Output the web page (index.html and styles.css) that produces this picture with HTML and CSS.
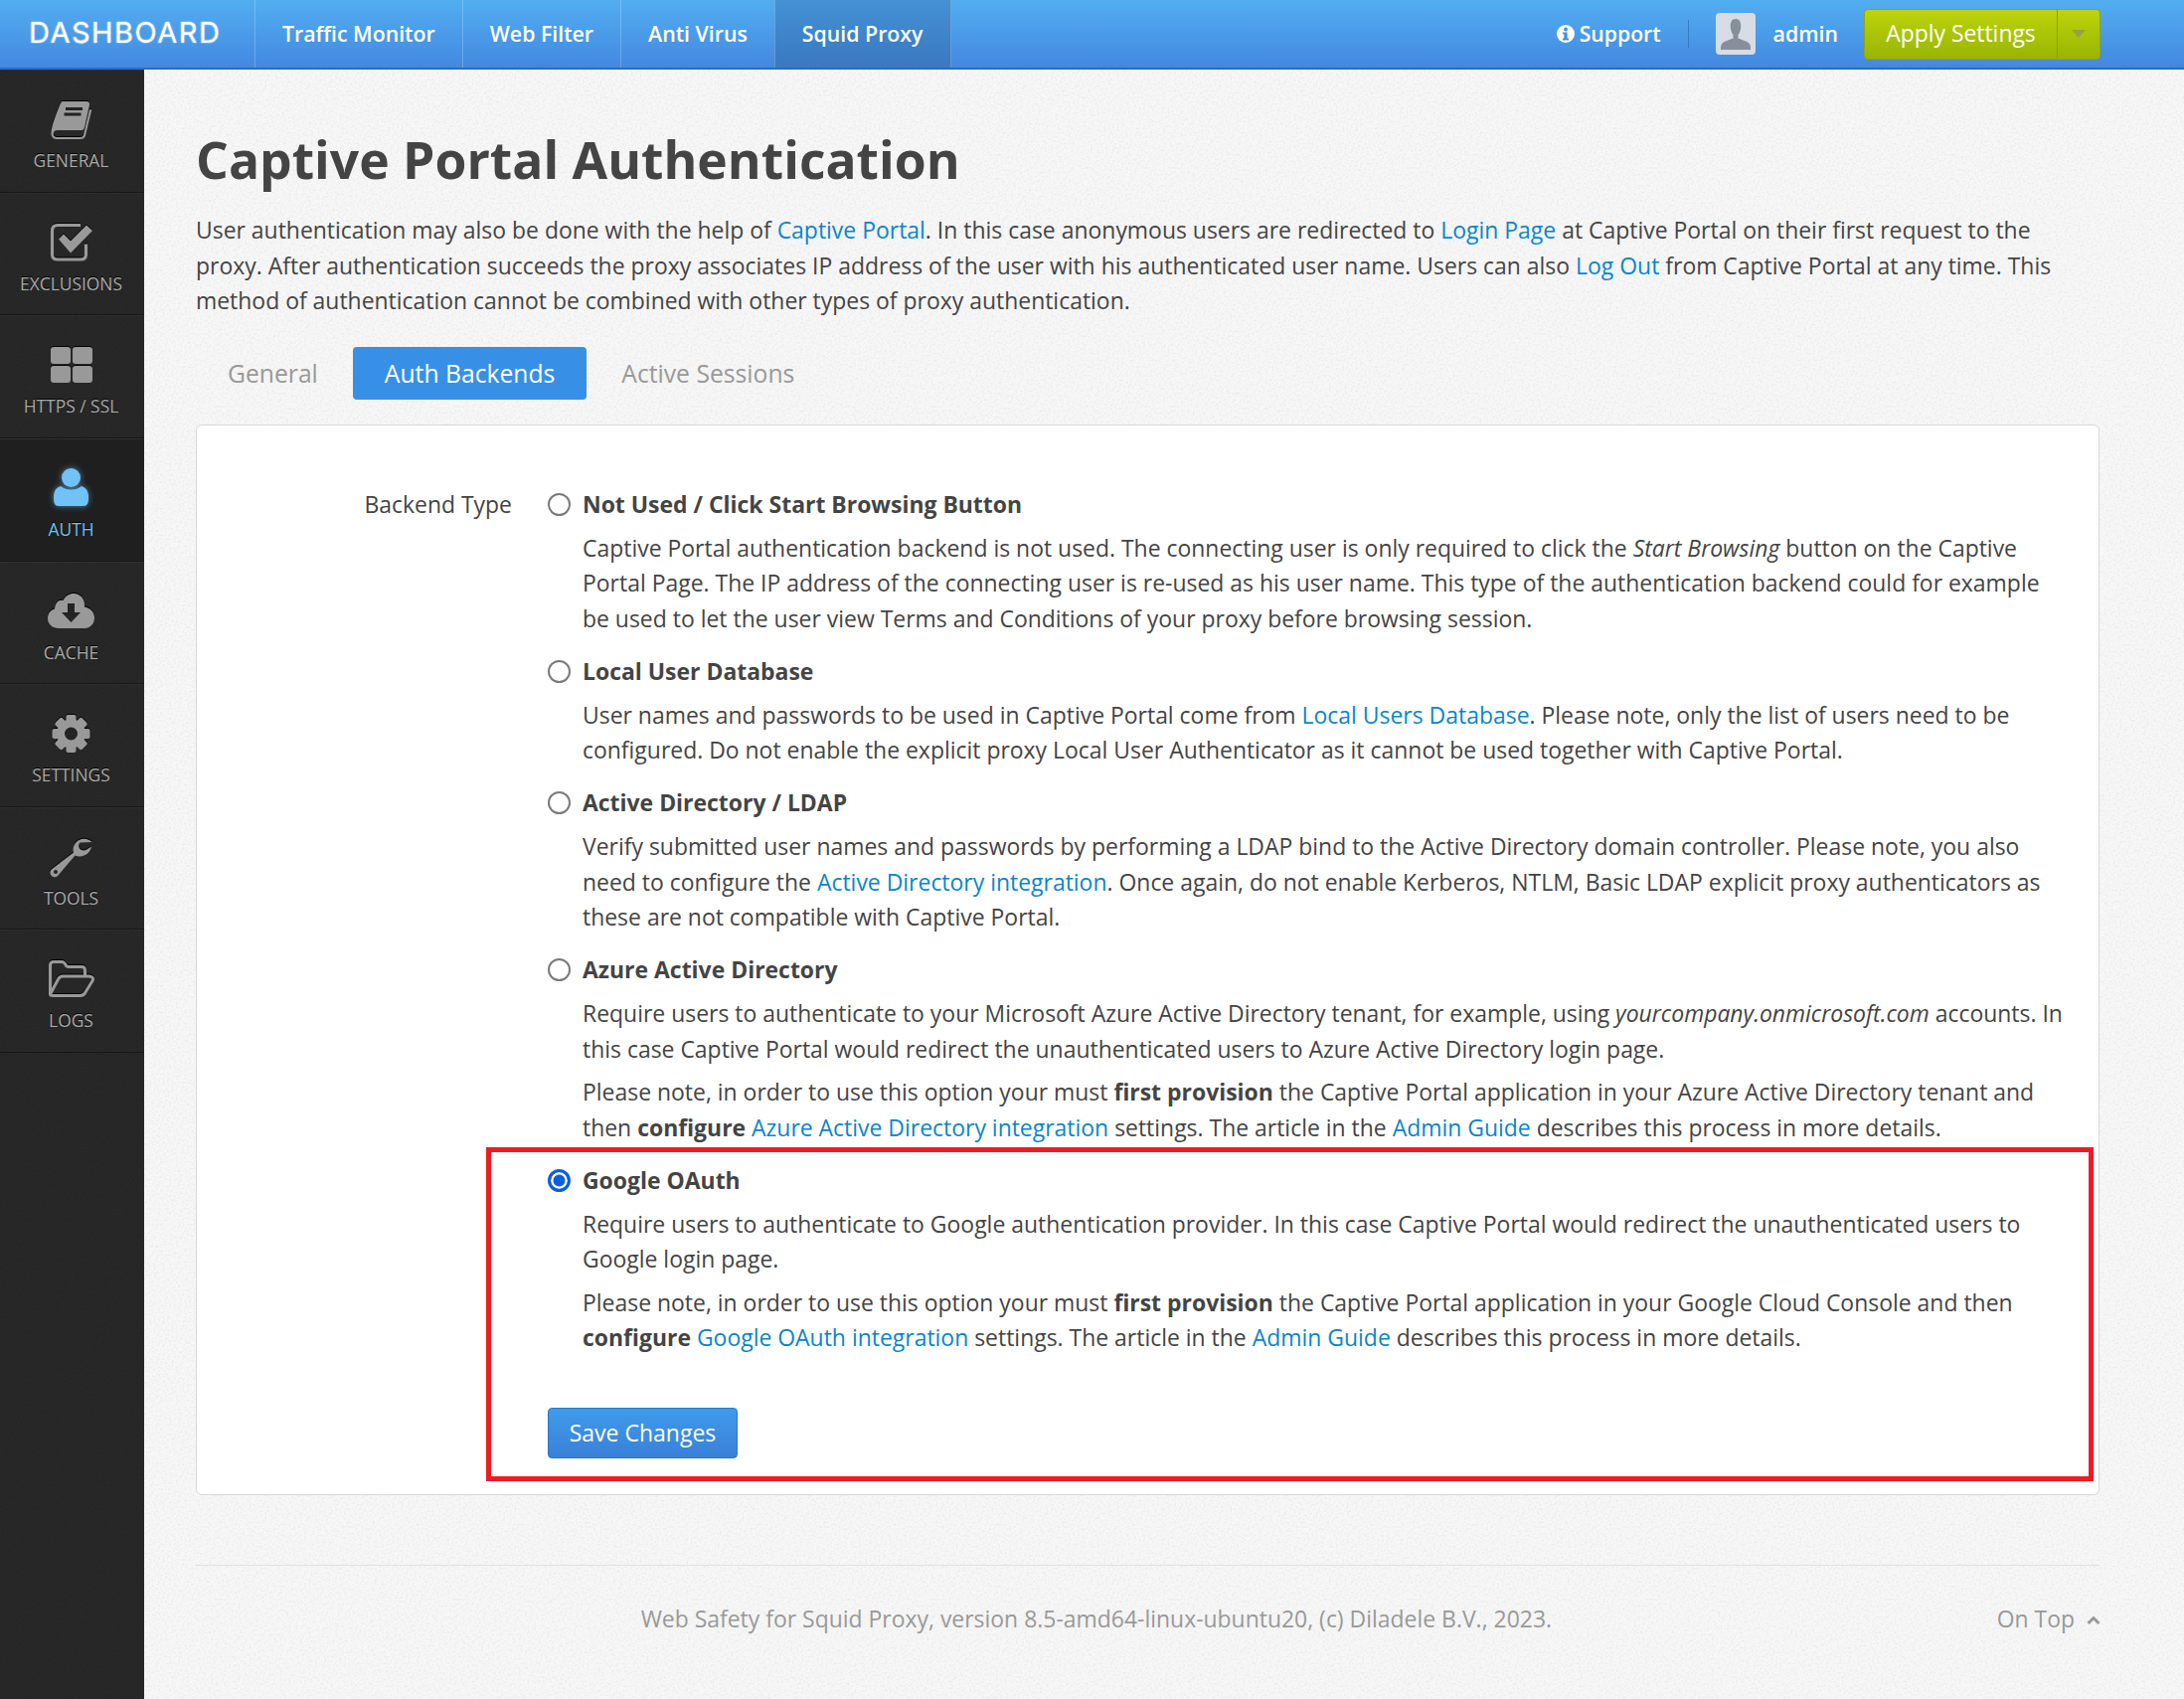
FILE: index.html
```html
<!DOCTYPE html>
<html lang="en">
<head>
<meta charset="utf-8">
<title>Captive Portal Authentication</title>
<link rel="stylesheet" href="styles.css">
</head>
<body>
<header class="topbar">
  <a class="brand">DASHBOARD</a>
  <nav class="topnav">
    <a class="topnav-item">Traffic Monitor</a>
    <a class="topnav-item">Web Filter</a>
    <a class="topnav-item">Anti Virus</a>
    <a class="topnav-item is-active">Squid Proxy</a>
  </nav>
  <div class="topright">
    <a class="support">
      <svg class="support-icon" viewBox="0 0 18 18"><circle cx="9" cy="9" r="9" fill="#fff"/><circle cx="9" cy="4.400" r="2" fill="#3f8ee0"/><path d="M6 7.400h4.600v6.200H12v1.900H6v-1.900h1.400V9.300H6z" fill="#3f8ee0"/></svg>
      <span>Support</span>
    </a>
    <span class="vsep"></span>
    <svg class="avatar" viewBox="0 0 40 42"><rect width="40" height="42" rx="4" fill="#d7dce5"/><path d="M20 6c4 0 5.500 3.500 5.200 8-.2 3.500-1.200 6-2.700 8v3.500l9 3.500c2 1 3.500 3 3.500 6v2H5v-2c0-3 1.500-5 3.500-6l9-3.500V22c-1.500-2-2.500-4.500-2.700-8-.3-4.500 1.200-8 5.200-8z" fill="#888e9a"/></svg>
    <span class="username">admin</span>
    <div class="apply">
      <a class="apply-main">Apply Settings</a>
      <a class="apply-caret"><i></i></a>
    </div>
  </div>
</header>

<div class="shell">
  <aside class="sidebar">
    <a class="side-item">
      <svg class="side-icon" viewBox="0 0 47 42"><path d="M14 2h25c2 0 3.500 1 3 3.500L37 28c-.6 2.500-2 3-4 3H10c-3 0-4.500 1.500-4.500 3 0 .5 0 1 .3 1.500L3.500 33C4 26 10 10 14 2z" fill="#999"/><path d="M5 32c-1.500 4 .5 7 4 7h24c2 0 3.400-1 4-3l6-25" fill="none" stroke="#999" stroke-width="2.200" stroke-linecap="round"/><path d="M18 9.500h17M16.500 15h17" stroke="#222" stroke-width="3"/></svg>
      <span>General</span>
    </a>
    <a class="side-item">
      <svg class="side-icon" viewBox="0 0 47 42"><g transform="translate(-1 -2.500)"><path d="M34 5H11c-3.500 0-5.500 2-5.500 5.500v24c0 3 2 5 5.500 5h23c3.500 0 5.500-2 5.500-5V24" fill="none" stroke="#999" stroke-width="3.200"/><path d="M12 19l5-5 7 7L40 5l6 5.500L24 33z" fill="#999"/></g></svg>
      <span>Exclusions</span>
    </a>
    <a class="side-item">
      <svg class="side-icon" viewBox="0 0 47 42"><rect x="3" y="2" width="20" height="17" rx="3" fill="#999"/><rect x="25" y="2" width="20" height="17" rx="3" fill="#999"/><rect x="3" y="21" width="20" height="17" rx="3" fill="#999"/><rect x="25" y="21" width="20" height="17" rx="3" fill="#999"/></svg>
      <span>HTTPS / SSL</span>
    </a>
    <a class="side-item is-active">
      <svg class="side-icon" viewBox="0 0 47 42"><circle cx="23.500" cy="9.500" r="9.500" fill="#71c2f6"/><path d="M13 18c3 2.500 6.500 3.500 10.500 3.500S31 20.500 34 18c4.500 1.500 7 5 7 11 0 6-1 9-5 9H11c-4 0-5-3-5-9 0-6 2.500-9.500 7-11z" fill="#71c2f6"/></svg>
      <span>Auth</span>
    </a>
    <a class="side-item">
      <svg class="side-icon" viewBox="0 0 47 42"><path d="M11 37C5 37 0 33 0 27c0-5 3-8.500 7-9.500C7.500 11 11 8 15.500 9 18 4 22 2 26 2c6.500 0 11 5 11 11 .1 1 0 2 0 2.500 5.500.8 10 5 10 11 0 6-4.500 10.500-10 10.500z" fill="#999"/><path d="M20 12h7v9h6L23.500 31 14 21h6z" fill="#232323"/></svg>
      <span>Cache</span>
    </a>
    <a class="side-item">
      <svg class="side-icon" viewBox="0 0 47 42"><g fill="#999"><circle cx="23.500" cy="20" r="14.500"/><rect x="18.500" y="1" width="10" height="38" rx="2"/><rect x="18.500" y="1" width="10" height="38" rx="2" transform="rotate(45 23.500 20)"/><rect x="18.500" y="1" width="10" height="38" rx="2" transform="rotate(90 23.500 20)"/><rect x="18.500" y="1" width="10" height="38" rx="2" transform="rotate(135 23.500 20)"/></g><circle cx="23.500" cy="20" r="6.500" fill="#232323"/></svg>
      <span>Settings</span>
    </a>
    <a class="side-item">
      <svg class="side-icon" viewBox="0 0 47 42"><path d="M44.500 5c-4-3.500-9-4-12.800-2-5 2.500-7.200 8-5.700 12.500L4.500 32c-2.500 2-2.500 4.500-1 6.500s4.500 2.700 6.500.5l17.500-20.500c4.500 2 10.500.5 13.500-3 1.500-1.700 2.500-3.500 3-6l-5.500 3.500c-2.500 1-5 .5-6.500-1.500-1.500-2-1-4.500.5-6z" fill="#999"/><circle cx="8" cy="35" r="2" fill="#232323"/></svg>
      <span>Tools</span>
    </a>
    <a class="side-item">
      <svg class="side-icon" viewBox="0 0 47 42"><path d="M2.500 36V6c0-2 1-3.500 3.500-3.500h8c2 0 3 1 4 3 .6 1.500 1.500 2 3 2h13c2.500 0 3.500 1.500 3.500 3.500v5M2.500 35l8-15c1-2 2.500-3 4.500-3h26.500c3 0 5 2 3.500 4.500L38 33c-1 2-2.500 3.500-5 3.500H5c-2 0-2.500-.5-2.500-1.500z" fill="none" stroke="#999" stroke-width="3" stroke-linejoin="round"/></svg>
      <span>Logs</span>
    </a>
  </aside>

  <main class="content">
    <h1 class="title">Captive Portal Authentication</h1>
    <p class="intro">User authentication may also be done with the help of <a>Captive Portal</a>. In this case anonymous users are redirected to <a>Login Page</a> at Captive Portal on their first request to the proxy. After authentication succeeds the proxy associates IP address of the user with his authenticated user name. Users can also <a>Log Out</a> from Captive Portal at any time. This method of authentication cannot be combined with other types of proxy authentication.</p>

    <div class="tabs">
      <a class="tab">General</a>
      <a class="tab is-active">Auth Backends</a>
      <a class="tab">Active Sessions</a>
    </div>

    <section class="panel">
      <div class="field-label">Backend Type</div>
      <form class="options">
        <div class="option">
          <label class="option-title"><input type="radio" name="backend"><span>Not Used / Click Start Browsing Button</span></label>
          <p>Captive Portal authentication backend is not used. The connecting user is only required to click the <em>Start Browsing</em> button on the Captive Portal Page. The IP address of the connecting user is re-used as his user name. This type of the authentication backend could for example be used to let the user view Terms and Conditions of your proxy before browsing session.</p>
        </div>
        <div class="option">
          <label class="option-title"><input type="radio" name="backend"><span>Local User Database</span></label>
          <p>User names and passwords to be used in Captive Portal come from <a>Local Users Database</a>. Please note, only the list of users need to be configured. Do not enable the explicit proxy Local User Authenticator as it cannot be used together with Captive Portal.</p>
        </div>
        <div class="option">
          <label class="option-title"><input type="radio" name="backend"><span>Active Directory / LDAP</span></label>
          <p>Verify submitted user names and passwords by performing a LDAP bind to the Active Directory domain controller. Please note, you also need to configure the <a>Active Directory integration</a>. Once again, do not enable Kerberos, NTLM, Basic LDAP explicit proxy authenticators as these are not compatible with Captive Portal.</p>
        </div>
        <div class="option">
          <label class="option-title"><input type="radio" name="backend"><span>Azure Active Directory</span></label>
          <p>Require users to authenticate to your Microsoft Azure Active Directory tenant, for example, using <em>yourcompany.onmicrosoft.com</em> accounts. In this case Captive Portal would redirect the unauthenticated users to Azure Active Directory login page.</p>
          <p>Please note, in order to use this option your must <strong>first provision</strong> the Captive Portal application in your Azure Active Directory tenant and then <strong>configure</strong> <a>Azure Active Directory integration</a> settings. The article in the <a>Admin Guide</a> describes this process in more details.</p>
        </div>
        <div class="option">
          <label class="option-title"><input type="radio" name="backend" checked><span>Google OAuth</span></label>
          <p>Require users to authenticate to Google authentication provider. In this case Captive Portal would redirect the unauthenticated users to Google login page.</p>
          <p>Please note, in order to use this option your must <strong>first provision</strong> the Captive Portal application in your Google Cloud Console and then <strong>configure</strong> <a>Google OAuth integration</a> settings. The article in the <a>Admin Guide</a> describes this process in more details.</p>
        </div>
        <a class="save-btn">Save Changes</a>
      </form>
      <div class="highlight"></div>
    </section>

    <footer class="footer">
      <div class="footer-text">Web Safety for Squid Proxy, version 8.5-amd64-linux-ubuntu20, (c) Diladele B.V., 2023.</div>
      <a class="ontop">On Top <svg class="ontop-icon" viewBox="0 0 14 10"><path d="M1.500 8L7 2.500 12.500 8" fill="none" stroke="#999" stroke-width="3"/></svg></a>
    </footer>
  </main>
</div>
</body>
</html>
```

FILE: styles.css
```css
* { box-sizing: border-box; }
html, body { margin: 0; padding: 0; }
body {
  font-family: "Open Sans", "Noto Sans", sans-serif;
  font-size: 22.950px;
  line-height: 35.5px;
  color: #444;
  background-color: #f7f7f7;
  background-image: url("data:image/svg+xml,%3Csvg xmlns='http://www.w3.org/2000/svg' width='240' height='240'%3E%3Cfilter id='n'%3E%3CfeTurbulence type='fractalNoise' baseFrequency='.45' numOctaves='3' stitchTiles='stitch'/%3E%3CfeColorMatrix values='0 0 0 0 0 0 0 0 0 0 0 0 0 0 0 .5 0 0 0 -.22'/%3E%3C/filter%3E%3Crect width='240' height='240' filter='url(%23n)' opacity='.22'/%3E%3C/svg%3E");
  min-height: 1709px;
  display: flex;
  flex-direction: column;
}
a { color: #0a86c9; text-decoration: none; }

/* Top bar */
.topbar {
  height: 70px;
  flex: none;
  display: flex;
  align-items: stretch;
  background: linear-gradient(#52aef0, #4388e0);
  border-bottom: 2px solid #2a6cc4;
}
.brand {
  width: 256px;
  padding-left: 29px;
  font-family: Inter, "Liberation Sans", sans-serif;
  font-size: 29px;
  font-weight: 400;
  letter-spacing: 1.500px;
  line-height: 66px;
  color: #fff;
  text-shadow: 0 0 2px rgba(255,255,255,.7);
}
.topnav { display: flex; }
.topnav-item {
  padding: 0 27px;
  border-left: 1px solid rgba(255,255,255,.22);
  font-size: 21.300px;
  font-weight: 600;
  line-height: 68px;
  color: #fff;
}
.topnav-item.is-active {
  background: linear-gradient(#4491d4, #3a78c0);
  border-right: 1px solid rgba(255,255,255,.22);
}
.topright { margin-left: auto; display: flex; align-items: center; padding-right: 84px; }
.support { display: flex; align-items: center; gap: 5px; color: #fff; font-size: 21.200px; font-weight: 600; }
.support-icon { width: 18px; height: 18px; }
.vsep { width: 1px; height: 28px; background: rgba(30,90,160,.5); margin: 0 27px; }
.avatar { width: 40px; height: 42px; }
.username { color: #fff; font-size: 21.300px; font-weight: 600; margin: 0 26px 0 18px; }
.apply {
  display: flex;
  height: 51px;
  width: 238px;
  border: 1px solid #8fa806;
  border-radius: 4px;
  background: linear-gradient(#bcd40a, #99b503);
}
.apply-main {
  width: 194px;
  border-right: 1px solid #88a106;
  text-align: center;
  font-size: 22.900px;
  line-height: 47px;
  color: #fff;
}
.apply-caret { flex: 1; display: flex; align-items: center; justify-content: center; }
.apply-caret i { border: 7px solid transparent; border-top: 8px solid #94a04a; border-bottom: 0; }

/* Layout */
.shell { flex: 1; display: flex; }

/* Sidebar */
.sidebar {
  width: 145px;
  flex: none;
  background-color: #252525;
  background-image: url("data:image/svg+xml,%3Csvg xmlns='http://www.w3.org/2000/svg' width='145' height='240'%3E%3Cfilter id='n'%3E%3CfeTurbulence type='fractalNoise' baseFrequency='.9' numOctaves='2'/%3E%3CfeColorMatrix values='0 0 0 0 1 0 0 0 0 1 0 0 0 0 1 .5 0 0 0 -.2'/%3E%3C/filter%3E%3Crect width='145' height='240' filter='url(%23n)' opacity='.1'/%3E%3C/svg%3E");
}
.side-item {
  display: flex;
  flex-direction: column;
  align-items: center;
  height: 123.650px;
  padding: 30px 2px 0 0;
  border-bottom: 1px solid #171717;
  box-shadow: inset 0 1px 0 #2f2f2f;
  color: #aaa;
  font-size: 17.400px;
  line-height: 24px;
  text-transform: uppercase;
  text-shadow: 0 -1px 0 #000;
}
.side-icon { width: 47px; height: 42px; filter: drop-shadow(0 -1px 0 #000); margin-bottom: 7px; }
.side-item.is-active { background: #1f1f1f; color: #71c2f6; }
.side-item.is-active .side-icon { filter: drop-shadow(0 0 3px rgba(113,194,246,.6)); }

/* Content */
.content { flex: 1; min-width: 0; padding: 51px 85px 0 52px; }
.title {
  margin: 0 0 15px;
  font-size: 51.600px;
  line-height: 78px;
  font-weight: 700;
  color: #444;
}
.intro { margin: 0 0 28px; }
.intro a, .option a { color: #0a86c9; }

.tabs { display: flex; gap: 3px; margin-bottom: 25px; }
.tab {
  height: 53px;
  padding: 0 32px;
  border-radius: 4px;
  font-size: 24.700px;
  line-height: 53px;
  color: #999;
}
.tab.is-active { background: #3790e6; color: #fff; }

/* Panel */
.panel {
  position: relative;
  display: flex;
  height: 1077px;
  padding: 62px 35px 0 0;
  background: #fff;
  border: 1px solid #d9d9d9;
  border-radius: 6px;
}
.field-label { width: 317px; flex: none; text-align: right; }
.options { flex: 1; min-width: 0; padding-left: 36px; }
.option { margin-bottom: 17.500px; }
.option-title { display: flex; align-items: center; gap: 12px; font-weight: 700; margin-bottom: 8.500px; }
.option-title input {
  appearance: none;
  width: 23px;
  height: 23px;
  margin: 0;
  flex: none;
  border: 2px solid #7a7a7a;
  border-radius: 50%;
  background: #fff;
}
.option-title input:checked { border: 3px solid #0d5fdc; box-shadow: inset 0 0 0 2.500px #fff; background: #0d5fdc; }
.option p { margin: 0 0 8px 35px; }
.option p:last-child { margin-bottom: 0; }
.save-btn {
  display: inline-block;
  margin-top: 35px;
  width: 191px;
  height: 51px;
  border: 1px solid #2f75c5;
  border-radius: 4px;
  background: linear-gradient(#3f9bea, #3a80d8);
  color: #fff;
  font-size: 23px;
  line-height: 49px;
  text-align: center;
}
.highlight {
  position: absolute;
  left: 291px;
  top: 726px;
  right: 5px;
  height: 336px;
  border: 5px solid #ed1c24;
  pointer-events: none;
}

/* Footer */
.footer {
  display: flex;
  margin-top: 70px;
  padding-top: 36px;
  border-top: 1px solid #e2e2e2;
  color: #999;
}
.footer-text { flex: 1; text-align: center; }
.ontop { color: #999; display: flex; align-items: center; gap: 12px; }
.ontop-icon { width: 14px; height: 10px; margin: 4px -1px 0 0; }
```
